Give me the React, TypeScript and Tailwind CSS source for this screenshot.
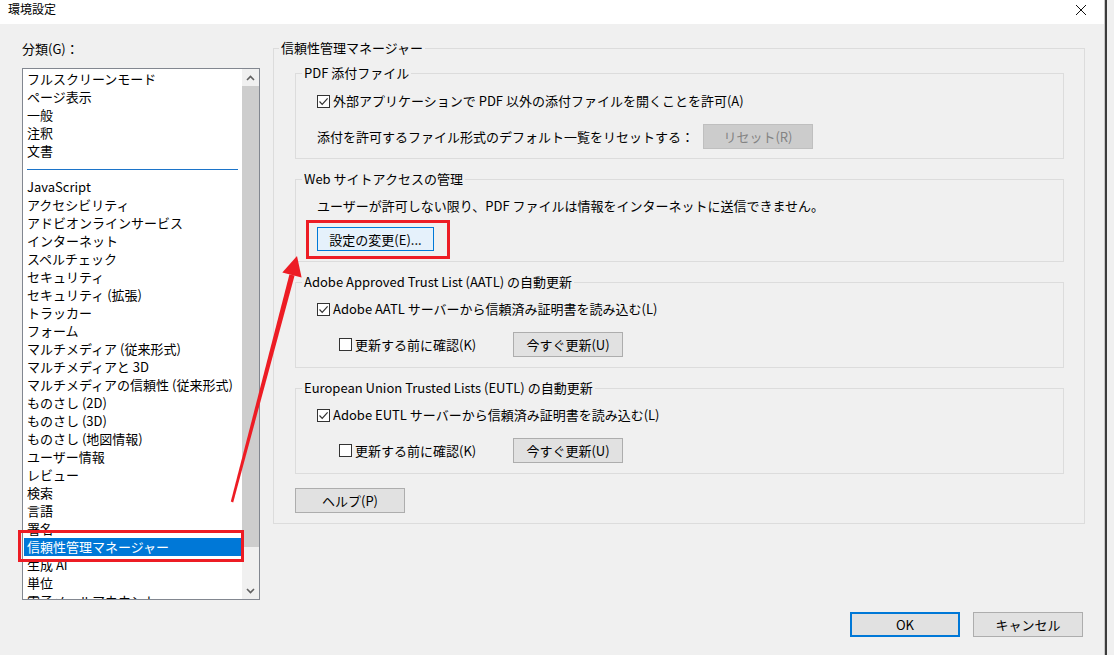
import type { ReactNode } from "react";

const topItems = ["フルスクリーンモード", "ページ表示", "一般", "注釈", "文書"];

const categories = [
  "JavaScript",
  "アクセシビリティ",
  "アドビオンラインサービス",
  "インターネット",
  "スペルチェック",
  "セキュリティ",
  "セキュリティ (拡張)",
  "トラッカー",
  "フォーム",
  "マルチメディア (従来形式)",
  "マルチメディアと 3D",
  "マルチメディアの信頼性 (従来形式)",
  "ものさし (2D)",
  "ものさし (3D)",
  "ものさし (地図情報)",
  "ユーザー情報",
  "レビュー",
  "検索",
  "言語",
  "署名",
  "信頼性管理マネージャー",
  "生成 AI",
  "単位",
  "電子メールアカウント",
];

const SELECTED = "信頼性管理マネージャー";

type ButtonVariant = "normal" | "default" | "disabled";

const buttonStyles: Record<ButtonVariant, string> = {
  normal: "border border-[#adadad] bg-[#e1e1e1] text-black",
  default: "border-2 border-[#0078d7] bg-[#e1e1e1] text-black",
  disabled: "border border-[#bfbfbf] bg-[#cccccc] text-[#838383]",
};

function Checkbox({ checked }: { checked?: boolean }) {
  return (
    <span className="flex h-[13px] w-[13px] shrink-0 items-center justify-center border border-[#333333] bg-white">
      {checked && (
        <svg width="11" height="11" viewBox="0 0 11 11">
          <path d="M1.5 5.5 L4.2 8.3 L9.6 2.4" fill="none" stroke="#333333" strokeWidth="1.2" />
        </svg>
      )}
    </span>
  );
}

function Button({
  children,
  variant = "normal",
  className = "",
}: {
  children: ReactNode;
  variant?: ButtonVariant;
  className?: string;
}) {
  return (
    <button
      className={`flex h-[25px] w-[110px] shrink-0 items-center justify-center leading-none ${buttonStyles[variant]} ${className}`}
    >
      {children}
    </button>
  );
}

function Group({ title, className = "", children }: { title: string; className?: string; children: ReactNode }) {
  return (
    <fieldset className={`border border-[#dcdcdc] pl-[21px] ${className}`}>
      <legend className="ml-[-15px] px-[2px] leading-[18px]">{title}</legend>
      {children}
    </fieldset>
  );
}

function ScrollArrow({ up }: { up?: boolean }) {
  return (
    <div className="flex h-[17px] items-center justify-center">
      <svg width="9" height="6" viewBox="0 0 9 6">
        <path
          d={up ? "M1 5 L4.5 1.5 L8 5" : "M1 1 L4.5 4.5 L8 1"}
          fill="none"
          stroke="#606060"
          strokeWidth="1.6"
        />
      </svg>
    </div>
  );
}

function UpdateRows({ label }: { label: string }) {
  return (
    <>
      <div className="mt-[9px] flex h-[18px] items-center gap-[3px] leading-[18px]">
        <Checkbox checked />
        <span>{label}</span>
      </div>
      <div className="mt-[14px] flex h-[25px] items-center pl-[22px]">
        <div className="flex w-[174px] shrink-0 items-center gap-[3px]">
          <Checkbox />
          <span>更新する前に確認(K)</span>
        </div>
        <Button>今すぐ更新(U)</Button>
      </div>
    </>
  );
}

export default function App() {
  return (
    <div className="relative flex h-[655px] w-[1114px] overflow-hidden bg-[#f0f0f0] font-['Noto_Sans_CJK_JP','Noto_Sans',sans-serif] text-[13px] text-black">
      <div className="flex w-[1105px] shrink-0 flex-col border-r border-[#c8c8c8]">
        {/* title bar */}
        <div className="flex h-[24px] items-start justify-between bg-white pl-[8px] pr-[17px]">
          <span className="pt-[1px] text-[12px] leading-[16px]">環境設定</span>
          <svg width="12" height="12" viewBox="0 0 12 12" className="mt-[4px]">
            <path d="M1 1 L11 11 M11 1 L1 11" stroke="#111" strokeWidth="1" />
          </svg>
        </div>

        <div className="flex gap-[13px] pl-[22px] pt-[15px]">
          {/* category list */}
          <div className="flex w-[238px] shrink-0 flex-col">
            <div className="mt-[1px] leading-[18px]">分類(G)：</div>
            <div className="mt-[10px] flex h-[532px] border border-[#828790] bg-white">
              <div className="flex-1 overflow-hidden pt-[1px]">
                {topItems.map((item) => (
                  <div key={item} className="mx-[1px] h-[18px] whitespace-nowrap pl-[3px] leading-[18px]">
                    {item}
                  </div>
                ))}
                <div className="flex h-[18px] items-center px-[4px]">
                  <div className="h-px w-full bg-[#1c74c9]" />
                </div>
                {categories.map((item) => (
                  <div
                    key={item}
                    className={`mx-[1px] h-[18px] whitespace-nowrap pl-[3px] leading-[18px] ${
                      item === SELECTED ? "bg-[#0078d7] text-white" : ""
                    }`}
                  >
                    {item}
                  </div>
                ))}
              </div>
              <div className="flex w-[17px] flex-col bg-[#f0f0f0]">
                <ScrollArrow up />
                <div className="h-[461px] bg-[#cdcdcd]" />
                <div className="flex-1" />
                <ScrollArrow />
              </div>
            </div>
          </div>

          {/* trust manager panel */}
          <fieldset className="w-[812px] shrink-0 self-start border border-[#dcdcdc] pb-[10px] pl-[21px] pr-[20px]">
            <legend className="ml-[-16px] px-[2px] leading-[18px]">信頼性管理マネージャー</legend>

            <Group title="PDF 添付ファイル" className="mt-[7px] pb-[9px]">
              <div className="mt-[10px] flex h-[18px] items-center gap-[3px] leading-[18px]">
                <Checkbox checked />
                <span>外部アプリケーションで PDF 以外の添付ファイルを開くことを許可(A)</span>
              </div>
              <div className="mt-[14px] flex h-[25px] items-center">
                <span className="w-[386px] shrink-0">添付を許可するファイル形式のデフォルト一覧をリセットする：</span>
                <Button variant="disabled">リセット(R)</Button>
              </div>
            </Group>

            <Group title="Web サイトアクセスの管理" className="mt-[11px] pb-[10px]">
              <div className="mt-[9px] h-[18px] leading-[18px]">
                ユーザーが許可しない限り、PDF ファイルは情報をインターネットに送信できません。
              </div>
              <button className="mt-[12px] flex h-[24px] w-[117px] items-center justify-center border border-[#0078d7] bg-[#e5f1fb] leading-none">
                設定の変更(E)...
              </button>
            </Group>

            <Group title="Adobe Approved Trust List (AATL) の自動更新" className="mt-[11px] pb-[10px]">
              <UpdateRows label="Adobe AATL サーバーから信頼済み証明書を読み込む(L)" />
            </Group>

            <Group title="European Union Trusted Lists (EUTL) の自動更新" className="mt-[11px] pb-[10px]">
              <UpdateRows label="Adobe EUTL サーバーから信頼済み証明書を読み込む(L)" />
            </Group>

            <Button className="mt-[14px]">ヘルプ(P)</Button>
          </fieldset>
        </div>

        {/* dialog buttons */}
        <div className="mt-[12px] flex justify-end gap-[13px] pr-[21px]">
          <Button variant="default">OK</Button>
          <Button>キャンセル</Button>
        </div>
      </div>
      <div className="flex-1 border-l-2 border-[#3c3c3c] bg-[#f0f0f0]" />

      {/* annotations */}
      <div className="pointer-events-none absolute inset-0">
        <div className="absolute left-[18px] top-[530px] h-[32px] w-[226px] border-[3px] border-[#ed1c24]" />
        <div className="absolute left-[306px] top-[220px] h-[39px] w-[144px] border-[3px] border-[#ed1c24]" />
        <svg className="absolute left-0 top-0" width="1114" height="655" viewBox="0 0 1114 655">
          <polygon points="230.8,501.6 233.2,502.4 294.6,275.6 289.4,274.4" fill="#ed1c24" />
          <polygon points="297,256 301.6,277.5 282.3,272.4" fill="#ed1c24" />
        </svg>
      </div>
    </div>
  );
}
